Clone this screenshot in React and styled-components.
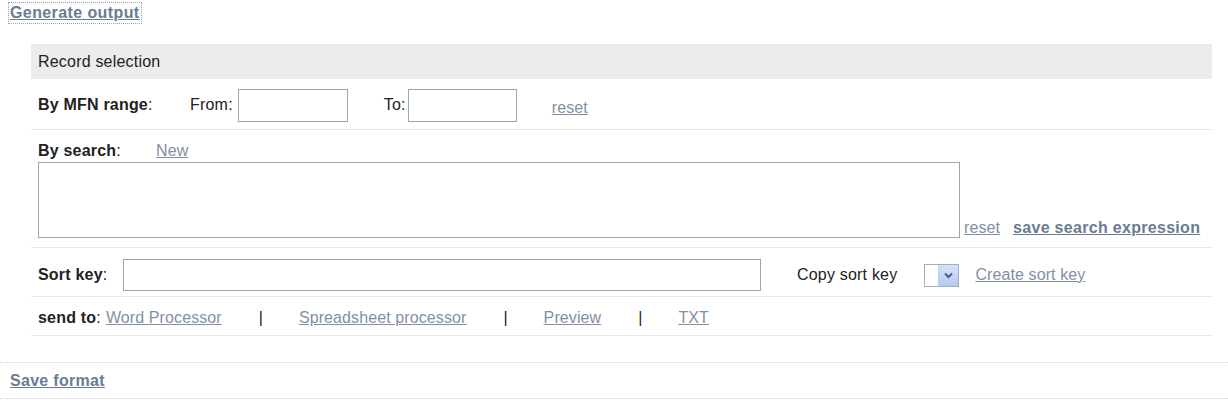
import React from "react";
import styled, { createGlobalStyle, css } from "styled-components";

/* ===== GLOBAL ===== */
const GlobalStyle = createGlobalStyle`
  body {
    margin: 0;
    background: #ffffff;
    font-family: "Liberation Sans", Arial, sans-serif;
    font-size: 16px;
    color: #222222;
  }
`;

/* ===== LINKS ===== */
const Link = styled.a`
  color: #8190a3;
  text-decoration: underline;
  cursor: pointer;
  letter-spacing: 0.1px;
  ${p => p.bold && css`
    font-weight: bold;
    color: #6b7b93;
    letter-spacing: 0.3px;
  `}
`;

const TopLink = styled(Link)`
  display: inline-block;
  margin: 3px 0 0 9px;
  padding: 0 1px;
  line-height: 20px;
  outline: 1px dotted #9aa3ae;
  letter-spacing: 0.4px;
`;

/* ===== PANEL ===== */
const Panel = styled.div`
  width: 1181px;
  margin: 21px 0 0 31px;
`;

const Header = styled.div`
  height: 35px;
  background: #ececec;
  padding-left: 7px;
  display: flex;
  align-items: center;
  letter-spacing: 0.2px;
`;

const Row = styled.div`
  box-sizing: border-box;
  display: flex;
  align-items: center;
  height: ${p => p.h}px;
  padding: ${p => p.pt || 0}px 7px 0;
  border-bottom: 1px solid #e6e6e6;
`;

const SearchRow = styled.div`
  padding: 10px 7px 9px;
  border-bottom: 1px solid #e6e6e6;
`;

const SearchHead = styled.div`
  display: flex;
  align-items: center;
  height: 21px;
`;

const SearchBody = styled.div`
  display: flex;
  align-items: flex-end;
`;

const Label = styled.span`
  font-weight: bold;
  letter-spacing: 0.2px;
  width: ${p => (p.w ? `${p.w}px` : "auto")};
  flex: none;
`;

const Colon = styled.span`
  font-weight: normal;
`;

const Text = styled.span`
  margin-left: ${p => p.ml || 0}px;
  letter-spacing: 0.2px;
`;

const Field = styled.div`
  box-sizing: border-box;
  width: ${p => p.w}px;
  height: ${p => p.h}px;
  margin-left: ${p => p.ml || 0}px;
  border: 1px solid #9ca8b0;
  background: #fff;
  flex: none;
`;

const Sep = styled.span`
  margin: 0 36px 0 37px;
  color: #222222;
  -webkit-font-smoothing: antialiased;
`;

/* ===== DROPDOWN ===== */
const Select = styled.div`
  box-sizing: border-box;
  width: 35px;
  height: 23px;
  margin: 0 16px 0 27px;
  border: 1px solid #a6afb9;
  background: #fff;
  display: flex;
  justify-content: flex-end;
  flex: none;
`;

const SelectButton = styled.div`
  width: 19px;
  height: 100%;
  background: linear-gradient(#d6e2fb, #b7c9f1);
  border-left: 1px solid #c4d0ea;
  display: flex;
  align-items: center;
  justify-content: center;
`;

/* ===== FOOTER ===== */
const Footer = styled.div`
  margin-top: 26px;
  height: 35px;
  border-top: 1px dotted #cfd3d8;
  border-bottom: 1px dotted #cfd3d8;
  display: flex;
  align-items: center;
  padding-left: 10px;
`;

/* ===== MAIN COMPONENT ===== */
export default function App() {
  return (
    <>
      <GlobalStyle />
      <TopLink bold>Generate output</TopLink>

      <Panel>
        <Header>Record selection</Header>

        {/* MFN range */}
        <Row h={51} pt={2}>
          <Label w={152}>By MFN range<Colon>:</Colon></Label>
          <Text>From:</Text>
          <Field w={110} h={33} ml={5} />
          <Text ml={36}>To:</Text>
          <Field w={109} h={33} ml={2} />
          <Link style={{ marginLeft: 35, marginTop: 6 }}>reset</Link>
        </Row>

        {/* By search */}
        <SearchRow>
          <SearchHead>
            <Label w={118}>By search<Colon>:</Colon></Label>
            <Link>New</Link>
          </SearchHead>
          <SearchBody>
            <Field w={922} h={76} style={{ marginTop: 1 }} />
            <Link style={{ marginLeft: 4, marginBottom: 1 }}>reset</Link>
            <Link bold style={{ marginLeft: 13, marginBottom: 1 }}>save search expression</Link>
          </SearchBody>
        </SearchRow>

        {/* Sort key */}
        <Row h={49} pt={6}>
          <Label w={85}>Sort key<Colon>:</Colon></Label>
          <Field w={638} h={32} />
          <Text ml={36}>Copy sort key</Text>
          <Select>
            <SelectButton>
              <svg width="9" height="7" viewBox="0 0 9 7">
                <path d="M1 1.5 L4.5 5 L8 1.5" fill="none" stroke="#4a5f8a" strokeWidth="2" />
              </svg>
            </SelectButton>
          </Select>
          <Link>Create sort key</Link>
        </Row>

        {/* Send to */}
        <Row h={39} pt={4}>
          <Label>send to<Colon>:</Colon></Label>
          <Link style={{ marginLeft: 5 }}>Word Processor</Link>
          <Sep>|</Sep>
          <Link>Spreadsheet processor</Link>
          <Sep>|</Sep>
          <Link>Preview</Link>
          <Sep>|</Sep>
          <Link>TXT</Link>
        </Row>
      </Panel>

      <Footer>
        <Link bold>Save format</Link>
      </Footer>
    </>
  );
}
